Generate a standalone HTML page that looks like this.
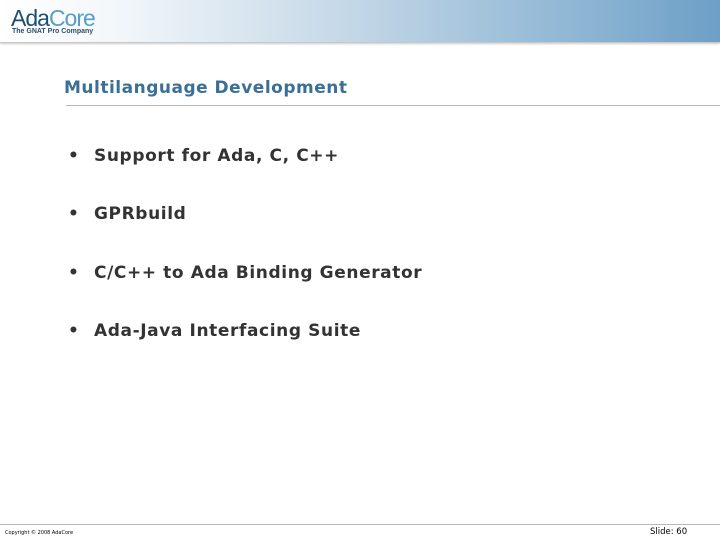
<!DOCTYPE html>
<html><head><meta charset="utf-8"><style>
html,body{margin:0;padding:0}
body{width:720px;height:540px;position:relative;background:#fff;font-family:"DejaVu Sans","Liberation Sans",sans-serif;overflow:hidden}
.hdr{position:absolute;left:0;top:0;width:720px;height:42px;background:linear-gradient(90deg,#ffffff 0%,#f4f8fb 15%,#c9dbe9 45%,#8fb6d4 80%,#6d9fc7 100%);border-bottom:1px solid #c8c8c8;box-shadow:0 1px 2px #ccc}
.logo{position:absolute;left:11px;top:6px;font-family:"Liberation Sans",sans-serif;font-size:23px;letter-spacing:-1px;line-height:24px}
.logo .a{color:#1f4f6f}.logo .c{color:#5a9cc9}
.tag{position:absolute;left:12px;top:28px;font-family:"Liberation Sans",sans-serif;font-size:7px;font-weight:bold;color:#2f4f6a}
.title{position:absolute;left:64px;top:78px;font-size:17px;font-weight:bold;color:#3a6f96;letter-spacing:0.5px}
.rule{position:absolute;left:66px;top:105px;width:654px;height:1px;background:#b8b8b8}
.b{position:absolute;left:68px;font-size:17px;font-weight:bold;color:#333;letter-spacing:0.6px}
.b span{position:absolute;left:26px;white-space:nowrap}
.frule{position:absolute;left:0;top:524px;width:720px;height:1px;background:#b8b8b8}
.copy{position:absolute;left:5px;top:530px;font-size:5px;color:#000}
.slide{position:absolute;left:650px;top:527px;font-size:8.5px;color:#000}
</style></head><body>
<div class="hdr"><div class="logo"><span class="a">Ada</span><span class="c">Core</span></div><div class="tag">The GNAT Pro Company</div></div>
<div class="title">Multilanguage Development</div>
<div class="rule"></div>
<div class="b" style="top:146px">•<span>Support for Ada, C, C++</span></div>
<div class="b" style="top:204px">•<span>GPRbuild</span></div>
<div class="b" style="top:263px">•<span>C/C++ to Ada Binding Generator</span></div>
<div class="b" style="top:321px">•<span>Ada-Java Interfacing Suite</span></div>
<div class="frule"></div>
<div class="copy">Copyright © 2008 AdaCore</div>
<div class="slide">Slide: 60</div>
</body></html>
